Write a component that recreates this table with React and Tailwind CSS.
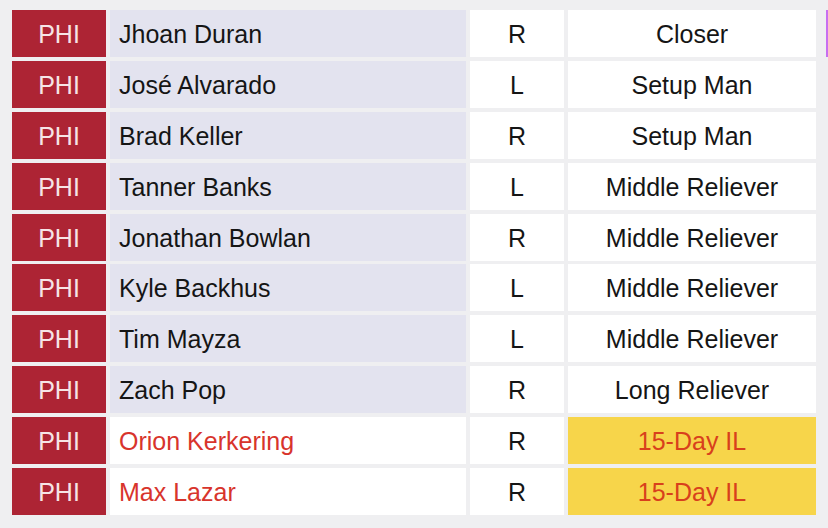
const rows = [
  ["Jhoan Duran", "R", "Closer", false],
  ["José Alvarado", "L", "Setup Man", false],
  ["Brad Keller", "R", "Setup Man", false],
  ["Tanner Banks", "L", "Middle Reliever", false],
  ["Jonathan Bowlan", "R", "Middle Reliever", false],
  ["Kyle Backhus", "L", "Middle Reliever", false],
  ["Tim Mayza", "L", "Middle Reliever", false],
  ["Zach Pop", "R", "Long Reliever", false],
  ["Orion Kerkering", "R", "15-Day IL", true],
  ["Max Lazar", "R", "15-Day IL", true],
];

export default function App() {
  return (
    <div
      className="w-[828px] h-[528px] bg-[#efeff1] overflow-hidden pt-[10px] pl-[12px]"
      style={{ fontFamily: '"Liberation Sans", Arial, sans-serif' }}
    >
      <div className="flex flex-col gap-[3.9px]">
        {rows.map(([name, hand, pos, il], i) => (
          <div key={i} className="flex gap-[4px] h-[47px] text-[25px] leading-none">
            <div className="w-[94px] shrink-0 bg-[#ad2434] text-[#f6e4e6] flex items-center justify-center pt-[2px]">
              PHI
            </div>
            <div
              className={`w-[356px] shrink-0 flex items-center pl-[9px] pt-[2px] ${
                il ? "bg-white text-[#d8342c]" : "bg-[#e3e3ef] text-[#151515]"
              }`}
            >
              {name}
            </div>
            <div className="w-[94px] shrink-0 bg-white text-[#151515] flex items-center justify-center pt-[2px]">
              {hand}
            </div>
            <div
              className={`w-[248px] shrink-0 flex items-center justify-center pt-[2px] ${
                il ? "bg-[#f7d54a] text-[#d8401c]" : "bg-white text-[#151515]"
              }`}
            >
              {pos}
            </div>
            {i === 0 && <div className="w-[10px] shrink-0 ml-[6px] bg-[#c86ef0]" />}
          </div>
        ))}
      </div>
    </div>
  );
}
